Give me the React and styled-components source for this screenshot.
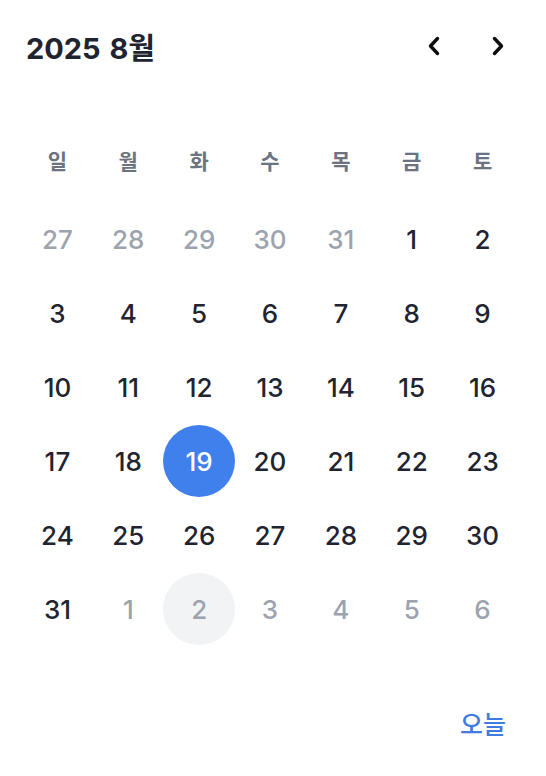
import React from "react";
import styled, { createGlobalStyle } from "styled-components";

const Global = createGlobalStyle`
  html, body { margin: 0; padding: 0; background: #ffffff; }
  body { font-family: Inter, "Noto Sans CJK KR", sans-serif; }
  * { box-sizing: border-box; }
`;

const Root = styled.div`
  width: 546px;
  height: 776px;
  padding: 22px 28px 0 22px;
  display: flex;
  flex-direction: column;
  background: #fff;
`;

const Header = styled.div`
  height: 48px;
  display: flex;
  align-items: center;
  justify-content: space-between;
  padding-left: 4px;
`;

const Title = styled.h2`
  margin: 0;
  font-family: Inter, "Noto Sans CJK KR", sans-serif;
  font-size: 29px;
  font-weight: 700;
  color: #1f2430;
  word-spacing: 2px;
`;

const Nav = styled.div`
  display: flex;
  gap: 24px;
`;

const NavButton = styled.button`
  width: 40px;
  height: 40px;
  border: none;
  background: transparent;
  padding: 0;
  display: flex;
  align-items: center;
  justify-content: center;
  color: #0d0d0d;
  cursor: pointer;
`;

const Weekdays = styled.div`
  margin-top: 70px;
  height: 40px;
  display: grid;
  grid-template-columns: repeat(7, minmax(0, 1fr));
  align-items: center;
`;

const Weekday = styled.div`
  text-align: center;
  font-family: "Noto Sans CJK KR", sans-serif;
  font-size: 21px;
  font-weight: 600;
  color: #6b7280;
`;

const Days = styled.div`
  margin-top: 23px;
  display: grid;
  grid-template-columns: repeat(7, minmax(0, 1fr));
  grid-auto-rows: 72px;
  row-gap: 2px;
`;

const Cell = styled.div`
  display: flex;
  align-items: center;
  justify-content: center;
`;

const Day = styled.button`
  flex: none;
  width: 72px;
  height: 72px;
  border-radius: 50%;
  border: none;
  padding: 0;
  display: flex;
  align-items: center;
  justify-content: center;
  font-family: Inter, "Noto Sans CJK KR", sans-serif;
  font-size: 26px;
  font-weight: 500;
  cursor: pointer;
  background: ${(p) => (p.$selected ? "#4080ec" : p.$highlight ? "#f2f3f5" : "transparent")};
  color: ${(p) => (p.$selected ? "#ffffff" : p.$muted ? "#9ca3af" : "#1f2430")};
`;

const Footer = styled.div`
  margin-top: 54px;
  height: 48px;
  display: flex;
  justify-content: flex-end;
  align-items: center;
`;

const TodayButton = styled.button`
  border: none;
  background: transparent;
  padding: 0 12px;
  height: 48px;
  font-family: "Noto Sans CJK KR", sans-serif;
  font-size: 25px;
  font-weight: 500;
  color: #3f7be0;
  cursor: pointer;
`;

const Chevron = ({ dir }) => (
  <svg width="24" height="24" viewBox="0 0 24 24" fill="none">
    <path
      d={dir === "left" ? "M15.5 4.5 L8.5 12 L15.5 19.5" : "M8.5 4.5 L15.5 12 L8.5 19.5"}
      stroke="currentColor"
      strokeWidth="3.4"
      strokeLinecap="round"
      strokeLinejoin="round"
    />
  </svg>
);

const weekdays = ["일", "월", "화", "수", "목", "금", "토"];

const days = [
  ...[27, 28, 29, 30, 31].map((d) => ({ d, muted: true })),
  ...Array.from({ length: 31 }, (_, i) => ({ d: i + 1 })),
  ...[1, 2, 3, 4, 5, 6].map((d) => ({ d, muted: true, next: true })),
];

export default function App() {
  return (
    <>
      <Global />
      <Root>
        <Header>
          <Title>2025 8월</Title>
          <Nav>
            <NavButton aria-label="이전 달">
              <Chevron dir="left" />
            </NavButton>
            <NavButton aria-label="다음 달">
              <Chevron dir="right" />
            </NavButton>
          </Nav>
        </Header>
        <Weekdays>
          {weekdays.map((w) => (
            <Weekday key={w}>{w}</Weekday>
          ))}
        </Weekdays>
        <Days>
          {days.map((x, i) => (
            <Cell key={i}>
              <Day
                $muted={x.muted}
                $selected={!x.muted && x.d === 19}
                $highlight={x.next && x.d === 2}
              >
                {x.d}
              </Day>
            </Cell>
          ))}
        </Days>
        <Footer>
          <TodayButton>오늘</TodayButton>
        </Footer>
      </Root>
    </>
  );
}
